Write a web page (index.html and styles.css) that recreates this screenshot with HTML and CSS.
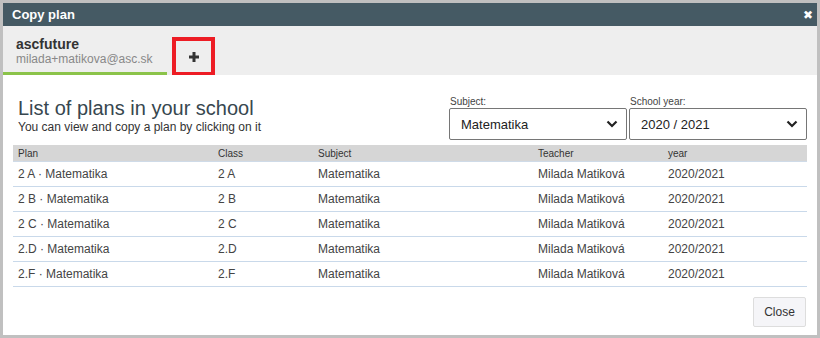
FILE: index.html
```html
<!DOCTYPE html>
<html lang="en">
<head>
    <meta charset="UTF-8">
    <title>Copy plan</title>
    <link rel="stylesheet" href="styles.css">
</head>
<body>
    <div class="dialog">
        <!-- Title bar -->
        <div class="title-bar">
            <span class="title">Copy plan</span>
            <span class="close-x">&#x2716;</span>
        </div>

        <!-- Account tabs -->
        <div class="tabs">
            <div class="tab active">
                <div class="tab-name">ascfuture</div>
                <div class="tab-mail">milada+matikova@asc.sk</div>
            </div>
            <div class="tab-add">
                <svg width="12" height="12" viewBox="0 0 12 12"><path d="M6 1v10M1 6h10" stroke="#333" stroke-width="3"/></svg>
            </div>
        </div>

        <div class="content">
            <div class="head-row">
                <div class="head-text">
                    <h1>List of plans in your school</h1>
                    <p>You can view and copy a plan by clicking on it</p>
                </div>
                <div class="filter">
                    <label>Subject:</label>
                    <div class="select">Matematika<span class="chev"><svg width="12" height="8" viewBox="0 0 12 8"><path d="M1.5 1.5l4.5 4.5 4.5-4.5" fill="none" stroke="#222" stroke-width="2.2"/></svg></span></div>
                </div>
                <div class="filter">
                    <label>School year:</label>
                    <div class="select">2020 / 2021<span class="chev"><svg width="12" height="8" viewBox="0 0 12 8"><path d="M1.5 1.5l4.5 4.5 4.5-4.5" fill="none" stroke="#222" stroke-width="2.2"/></svg></span></div>
                </div>
            </div>

            <table>
                <thead>
                    <tr>
                        <th class="c-plan">Plan</th>
                        <th class="c-class">Class</th>
                        <th class="c-subj">Subject</th>
                        <th class="c-teach">Teacher</th>
                        <th>year</th>
                    </tr>
                </thead>
                <tbody>
                    <tr><td>2 A · Matematika</td><td>2 A</td><td>Matematika</td><td>Milada Matiková</td><td>2020/2021</td></tr>
                    <tr><td>2 B · Matematika</td><td>2 B</td><td>Matematika</td><td>Milada Matiková</td><td>2020/2021</td></tr>
                    <tr><td>2 C · Matematika</td><td>2 C</td><td>Matematika</td><td>Milada Matiková</td><td>2020/2021</td></tr>
                    <tr><td>2.D · Matematika</td><td>2.D</td><td>Matematika</td><td>Milada Matiková</td><td>2020/2021</td></tr>
                    <tr><td>2.F · Matematika</td><td>2.F</td><td>Matematika</td><td>Milada Matiková</td><td>2020/2021</td></tr>
                </tbody>
            </table>

            <div class="footer">
                <button class="btn-close">Close</button>
            </div>
        </div>
    </div>
</body>
</html>
```

FILE: styles.css
```css
/* General Styles */
body {
    margin: 0;
    background-color: #c0c0c0;
    font-family: "Liberation Sans", Arial, sans-serif;
    color: #333;
}

.dialog {
    margin: 3px;
    width: 814px;
    height: 332px;
    background-color: #fff;
    display: flex;
    flex-direction: column;
}

/* Title bar */
.title-bar {
    height: 23px;
    background-color: #455a64;
    color: #fff;
    display: flex;
    align-items: center;
    justify-content: space-between;
    padding: 0 4px 0 9px;
}

.title {
    font-size: 13px;
    font-weight: bold;
}

.close-x {
    font-size: 12px;
    line-height: 1;
}

/* Tabs */
.tabs {
    height: 49px;
    background-color: #eeeeee;
    display: flex;
    align-items: stretch;
}

.tab {
    padding: 10px 0 0 13px;
    box-sizing: border-box;
    width: 164px;
}

.tab.active {
    border-bottom: 3px solid #8bc34a;
}

.tab-name {
    font-size: 14px;
    font-weight: bold;
    color: #333;
}

.tab-mail {
    font-size: 12px;
    color: #888;
}

.tab-add {
    margin: 11px 0 0 5px;
    width: 43px;
    height: 38px;
    box-sizing: border-box;
    border: 4px solid #ed1c24;
    border-bottom-width: 3px;
    display: flex;
    align-items: center;
    justify-content: center;
}

/* Content */
.content {
    flex: 1;
    padding: 0 10px;
    display: flex;
    flex-direction: column;
}

.head-row {
    display: flex;
    align-items: flex-end;
    height: 65px;
}

.head-text {
    flex: 1;
    padding-left: 5px;
    padding-bottom: 6px;
}

h1 {
    margin: 0;
    font-size: 20px;
    font-weight: normal;
    color: #37474f;
}

p {
    margin: 0;
    font-size: 12px;
    color: #333;
}

.filter {
    width: 178px;
    margin-left: 2px;
}

.filter label {
    display: block;
    font-size: 10px;
    color: #444;
    padding-left: 1px;
    margin-bottom: 1px;
}

.select {
    height: 32px;
    box-sizing: border-box;
    border: 1px solid #767676;
    border-radius: 2px;
    display: flex;
    align-items: center;
    justify-content: space-between;
    padding: 0 8px 0 11px;
    font-size: 13px;
    color: #222;
}

.chev {
    display: flex;
}

/* Table */
table {
    width: 794px;
    border-collapse: collapse;
    margin-top: 5px;
    font-size: 12px;
}

th {
    background-color: #d6d6d6;
    font-size: 10px;
    font-weight: normal;
    text-align: left;
    color: #333;
    height: 16px;
    padding: 0 5px;
    border-bottom: 1px solid #cfdbe8;
}

td {
    height: 24px;
    padding: 0 5px;
    border-bottom: 1px solid #c9d9ea;
    color: #444;
}

.c-plan { width: 190px; }
.c-class { width: 90px; }
.c-subj { width: 210px; }
.c-teach { width: 120px; }

/* Footer */
.footer {
    display: flex;
    justify-content: flex-end;
    margin-top: 10px;
    padding-right: 1px;
}

.btn-close {
    width: 53px;
    height: 30px;
    background-color: #f5f5f8;
    border: 1px solid #ddd;
    border-radius: 2px;
    font-family: "Liberation Sans", Arial, sans-serif;
    font-size: 12px;
    color: #333;
}
```
